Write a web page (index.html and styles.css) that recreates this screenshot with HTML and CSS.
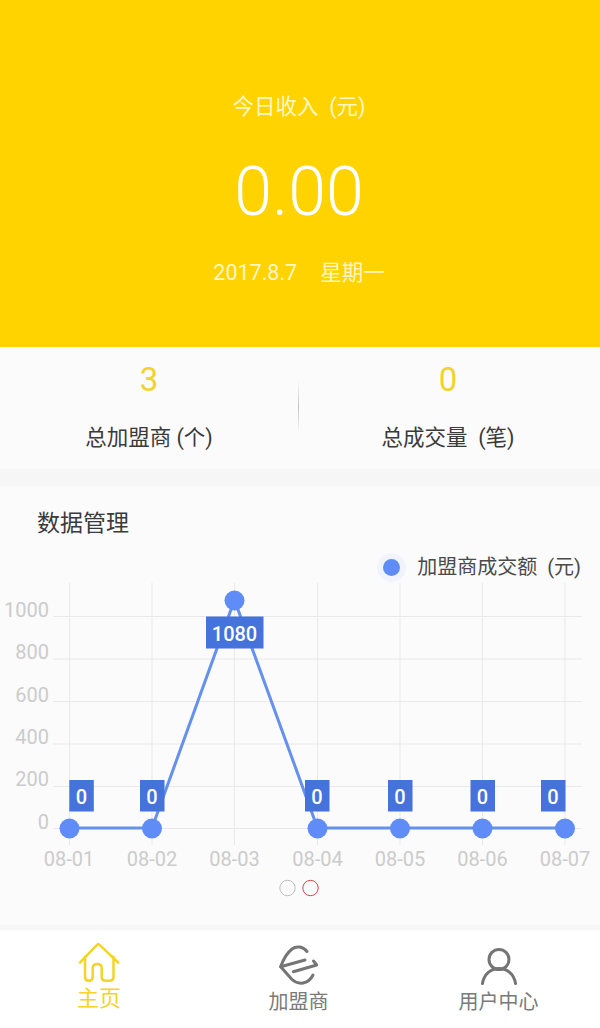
FILE: index.html
```html
<!DOCTYPE html>
<html lang="zh-CN">
<head>
<meta charset="utf-8">
<title>今日收入</title>
<link rel="stylesheet" href="styles.css">
</head>
<body>
<div class="app">
  <header class="hero">
    <div class="hero-label">今日收入&nbsp;&nbsp;(元)</div>
    <div class="hero-value">0.00</div>
    <div class="hero-date"><span>2017.8.7</span><span>星期一</span></div>
  </header>
  <section class="stats">
    <div class="stat">
      <div class="stat-value">3</div>
      <div class="stat-label">总加盟商 (个)</div>
    </div>
    <div class="stat-divider"></div>
    <div class="stat">
      <div class="stat-value">0</div>
      <div class="stat-label">总成交量&nbsp;&nbsp;(笔)</div>
    </div>
  </section>
  <section class="panel">
    <h2 class="panel-title">数据管理</h2>
    <div class="legend"><span class="legend-dot"></span><span>加盟商成交额&nbsp;&nbsp;(元)</span></div>
    <svg class="chart" viewBox="0 0 600 340" width="600" height="340" aria-label="chart">
      <g class="grid">
        <path d="M53 38.500H582M53 81H582M53 123.500H582M53 166H582M53 208.500H582M53 250.500H582"/>
        <path d="M69.500 5V267M152 5V267M234.500 5V267M317.500 5V267M400 5V267M482.500 5V267M565 5V267"/>
      </g>
      <g class="y-labels">
        <text x="49" y="39">1000</text>
        <text x="49" y="81">800</text>
        <text x="49" y="123.500">600</text>
        <text x="49" y="165.500">400</text>
        <text x="49" y="208">200</text>
        <text x="49" y="251">0</text>
      </g>
      <g class="x-labels">
        <text x="69" y="288">08-01</text>
        <text x="152" y="288">08-02</text>
        <text x="234.500" y="288">08-03</text>
        <text x="317.500" y="288">08-04</text>
        <text x="400" y="288">08-05</text>
        <text x="482.500" y="288">08-06</text>
        <text x="565" y="288">08-07</text>
      </g>
      <polyline class="line" points="69.500,250 152,250 234.500,22 317.500,250 400,250 482.500,250 565,250"/>
      <g class="points">
        <circle cx="69.500" cy="250.500" r="10"/>
        <circle cx="152" cy="250.500" r="10"/>
        <circle cx="234.500" cy="22.500" r="10"/>
        <circle cx="317.500" cy="250.500" r="10"/>
        <circle cx="400" cy="250.500" r="10"/>
        <circle cx="482.500" cy="250.500" r="10"/>
        <circle cx="565" cy="250.500" r="10"/>
      </g>
      <g class="tags">
        <rect x="69.300" y="202" width="24.500" height="31.500"/>
        <rect x="140" y="202" width="24.500" height="31.500"/>
        <rect x="206" y="38.500" width="57.500" height="32"/>
        <rect x="305" y="202" width="24.500" height="31.500"/>
        <rect x="388" y="202" width="24.500" height="31.500"/>
        <rect x="470.500" y="202" width="24.500" height="31.500"/>
        <rect x="541" y="202" width="24.500" height="31.500"/>
      </g>
      <g class="tag-labels">
        <text x="81.500" y="225.500">0</text>
        <text x="152" y="225.500">0</text>
        <text x="234.500" y="62.500">1080</text>
        <text x="317" y="225.500">0</text>
        <text x="400" y="225.500">0</text>
        <text x="482.500" y="225.500">0</text>
        <text x="553" y="225.500">0</text>
      </g>
      <circle class="page-dot" cx="287.500" cy="310" r="7.700"/>
      <circle class="page-dot active" cx="310.500" cy="310" r="7.700"/>
    </svg>
  </section>
  <nav class="tabs">
    <a class="tab active">
      <svg class="tab-icon" viewBox="0 0 44 44" width="44" height="44">
        <path d="M3 20.700 20 2.800a1.800 1.800 0 0 1 2.600 0L41.300 20.700"/>
        <path d="M8 14.700V35q0 3.700 3.700 3.700H12q3.700 0 3.700-3.700V26q0-4 4.500-4t4.500 4v9q0 3.700 3.700 3.700h4.400q3.700 0 3.700-3.700V14.700"/>
      </svg>
      <span class="tab-text">主页</span>
    </a>
    <a class="tab">
      <svg class="tab-icon" viewBox="0 0 44 44" width="44" height="44">
        <path d="M30 9.500C26 4.500 19.500 3.500 15 7 10 11 6 18 3.700 24.700L28 18"/>
        <path d="M16.300 29.700 39.700 23 36.500 19"/>
        <path d="M3.700 24.700 15 37.500Q20 42 26 41 32.500 40 36 33"/>
      </svg>
      <span class="tab-text">加盟商</span>
    </a>
    <a class="tab">
      <svg class="tab-icon" viewBox="0 0 44 44" width="44" height="44">
        <circle cx="22" cy="17.500" r="10"/>
        <path d="M5.500 41.500C7 32 14 26.500 22 26.500s15 5.500 16.500 15"/>
      </svg>
      <span class="tab-text">用户中心</span>
    </a>
  </nav>
</div>
</body>
</html>
```
FILE: styles.css
```css
* { box-sizing: border-box; }
html, body { margin: 0; padding: 0; }
body {
  width: 600px;
  height: 1028px;
  overflow: hidden;
  background: #f6f6f6;
  font-family: Roboto, "Noto Sans CJK SC", sans-serif;
}
.app { display: flex; flex-direction: column; height: 1028px; }

.hero {
  height: 347px;
  background: #ffd300;
  color: #fff6c8;
  display: flex;
  flex-direction: column;
  align-items: center;
  padding: 91px 2px 0 0;
}
.hero-label { font-size: 21.500px; line-height: 31px; }
.hero-value {
  font-size: 68px;
  font-weight: 300;
  line-height: 80px;
  margin-top: 30px;
  color: #fff;
}
.hero-date {
  display: flex;
  gap: 23px;
  font-size: 21.500px;
  line-height: 30px;
  margin-top: 26px;
}

.stats {
  height: 122px;
  background: #fbfbfb;
  display: flex;
  align-items: flex-start;
  padding-right: 3px;
}
.stat {
  flex: 1;
  display: flex;
  flex-direction: column;
  align-items: center;
}
.stat-value {
  font-size: 33px;
  line-height: 40px;
  margin-top: 13px;
  color: #f2d32e;
}
.stat-label {
  font-size: 21.500px;
  line-height: 30px;
  margin-top: 23px;
  color: #3a3a3a;
}
.stat-divider {
  width: 1px;
  height: 54px;
  margin-top: 33px;
  background: linear-gradient(#fbfbfb, #c4c4c4 50%, #fbfbfb);
}

.panel {
  margin-top: 17px;
  height: 439px;
  background: #fbfbfb;
  display: flex;
  flex-direction: column;
}
.panel-title {
  margin: 21px 0 0 37px;
  font-size: 23px;
  font-weight: 400;
  line-height: 34px;
  color: #3a3a3a;
}
.legend {
  display: flex;
  align-items: center;
  justify-content: flex-end;
  gap: 17px;
  padding-right: 19px;
  margin-top: 12px;
  font-size: 20px;
  line-height: 28px;
  color: #4a4a4a;
}
.legend-dot {
  width: 17px;
  height: 17px;
  border-radius: 50%;
  background: #5f8cf7;
  box-shadow: 0 0 0 6px #f1f4fc;
}
.chart { display: block; flex: none; margin-top: -3px; }
.grid path { fill: none; stroke: #e9e9e9; stroke-width: 1; }
.y-labels text { font-size: 20px; fill: #cbcbcb; text-anchor: end; }
.x-labels text { font-size: 20px; fill: #cbcbcb; text-anchor: middle; }
.line { fill: none; stroke: #6490ee; stroke-width: 3; }
.points circle { fill: #5f8cf7; }
.tags rect { fill: #4672dc; }
.tag-labels text { font-size: 20px; font-weight: 500; fill: #fff; text-anchor: middle; }
.page-dot { fill: none; stroke: #bdbdbd; stroke-width: 1; }
.page-dot.active { stroke: #d9454f; }

.tabs {
  height: 98px;
  margin-top: 5px;
  background: #fff;
  display: grid;
  grid-template-columns: 198px 201px 199px;
}
.tab {
  display: flex;
  flex-direction: column;
  align-items: center;
  padding-top: 12px;
  color: #7a7a7a;
}
.tab-icon { display: block; fill: none; stroke: #757575; stroke-width: 3; stroke-linecap: round; stroke-linejoin: round; }
.tab-text { font-size: 20px; line-height: 26px; margin-top: 3px; }
.tab.active { color: #f5d327; }
.tab.active .tab-icon { stroke: #f5d327; stroke-width: 2.500; }
.tab.active .tab-text { font-size: 22px; line-height: 28px; margin-top: -1px; }
```
